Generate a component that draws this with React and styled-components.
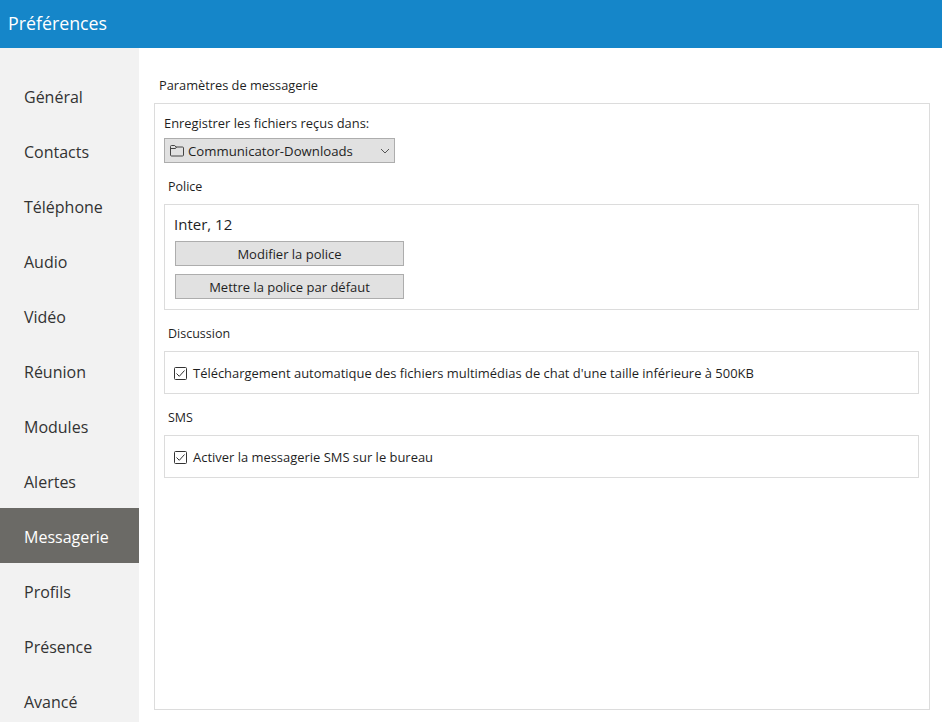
import React from "react";
import styled, { createGlobalStyle } from "styled-components";

const GlobalStyle = createGlobalStyle`
  html, body {
    margin: 0;
    height: 100%;
    overflow: hidden;
    background: #fff;
  }
  body {
    font-family: "Open Sans", "Noto Sans", "Liberation Sans", sans-serif;
    color: #1f1f1f;
  }
`;

const Page = styled.div`
  width: 942px;
  height: 722px;
  display: flex;
  flex-direction: column;
  overflow: hidden;
`;

const Header = styled.header`
  height: 48px;
  flex: none;
  background: #1586c9;
  color: #fff;
  font-size: 17.8px;
  line-height: 46px;
  padding-left: 8px;
`;

const Body = styled.div`
  flex: 1;
  display: flex;
  min-height: 0;
`;

const Sidebar = styled.nav`
  width: 139px;
  flex: none;
  background: #f2f2f2;
  padding-top: 20px;
  overflow: hidden;
`;

const NavItem = styled.div`
  height: 55px;
  box-sizing: border-box;
  padding: 4px 0 0 24px;
  line-height: 51px;
  font-size: 16px;
  background: ${(p) => (p.$active ? "#6b6a66" : "transparent")};
  color: ${(p) => (p.$active ? "#fff" : "#333")};
`;

const Content = styled.main`
  flex: 1;
  padding: 28px 12px 12px 15px;
  display: flex;
  flex-direction: column;
  min-width: 0;
`;

const PageTitle = styled.div`
  font-size: 12.8px;
  line-height: 18px;
  padding-left: 5px;
  margin-bottom: 9px;
`;

const Panel = styled.section`
  flex: 1;
  border: 1px solid #dcdcdc;
  padding: 10px 10px 0 9px;
`;

const FieldLabel = styled.div`
  font-size: 12.9px;
  line-height: 18px;
  margin-bottom: 6px;
`;

const Select = styled.div`
  width: 231px;
  height: 25px;
  box-sizing: border-box;
  background: #e1e1e1;
  border: 1px solid #adadad;
  display: flex;
  align-items: center;
  padding: 0 4px 0 5px;
  font-size: 13.2px;
  line-height: 22px;
  gap: 4px;
`;

const SelectText = styled.span`
  flex: 1;
`;

const SectionTitle = styled.div`
  font-size: 12.5px;
  line-height: 18px;
  padding: 1px 0 0 4px;
  margin: 14px 0 8px;
`;

const Box = styled.div`
  border: 1px solid #dcdcdc;
  padding: ${(p) => p.$padding};
`;

const FontName = styled.div`
  font-size: 15px;
  line-height: 20px;
  margin: 0 0 7px -1px;
`;

const Button = styled.div`
  width: 229px;
  height: 25px;
  box-sizing: border-box;
  background: #e1e1e1;
  border: 1px solid #adadad;
  font-size: 13px;
  line-height: 25px;
  text-align: center;
  & + & {
    margin-top: 8px;
  }
`;

const CheckRow = styled.div`
  display: flex;
  align-items: center;
  gap: 6px;
  font-size: 12.95px;
  line-height: 18px;
`;

const FolderIcon = () => (
  <svg width="14" height="12" viewBox="0 0 14 12" fill="none" stroke="#444" strokeWidth="1">
    <path d="M.5 10V1.5a1 1 0 0 1 1-1h3.2l1.3 1.5h6.5a1 1 0 0 1 1 1V10a1 1 0 0 1-1 1h-11a1 1 0 0 1-1-1zM.5 3.500h5l1-1.500" />
  </svg>
);

const Chevron = () => (
  <svg width="10" height="6" viewBox="0 0 10 6" fill="none" stroke="#555" strokeWidth="1">
    <path d="M1 1l4 4 4-4" />
  </svg>
);

const CheckIcon = () => (
  <svg width="13" height="13" viewBox="0 0 13 13" fill="none" stroke="#333" strokeWidth="1">
    <rect x=".5" y=".5" width="12" height="12" rx="1" />
    <path d="M2.500 6.500l2.800 2.800L10.500 3.500" />
  </svg>
);

const navItems = [
  "Général",
  "Contacts",
  "Téléphone",
  "Audio",
  "Vidéo",
  "Réunion",
  "Modules",
  "Alertes",
  "Messagerie",
  "Profils",
  "Présence",
  "Avancé",
];

export default function App() {
  return (
    <Page>
      <GlobalStyle />
      <Header>Préférences</Header>
      <Body>
        <Sidebar>
          {navItems.map((item) => (
            <NavItem key={item} $active={item === "Messagerie"}>
              {item}
            </NavItem>
          ))}
        </Sidebar>
        <Content>
          <PageTitle>Paramètres de messagerie</PageTitle>
          <Panel>
            <FieldLabel>Enregistrer les fichiers reçus dans:</FieldLabel>
            <Select>
              <FolderIcon />
              <SelectText>Communicator-Downloads</SelectText>
              <Chevron />
            </Select>
            <SectionTitle>Police</SectionTitle>
            <Box $padding="9px 10px 10px 10px">
              <FontName>Inter, 12</FontName>
              <Button>Modifier la police</Button>
              <Button>Mettre la police par défaut</Button>
            </Box>
            <SectionTitle>Discussion</SectionTitle>
            <Box $padding="12px 10px 11px 9px">
              <CheckRow>
                <CheckIcon />
                Téléchargement automatique des fichiers multimédias de chat d'une taille inférieure à 500KB
              </CheckRow>
            </Box>
            <SectionTitle>SMS</SectionTitle>
            <Box $padding="12px 10px 11px 9px">
              <CheckRow>
                <CheckIcon />
                Activer la messagerie SMS sur le bureau
              </CheckRow>
            </Box>
          </Panel>
        </Content>
      </Body>
    </Page>
  );
}
